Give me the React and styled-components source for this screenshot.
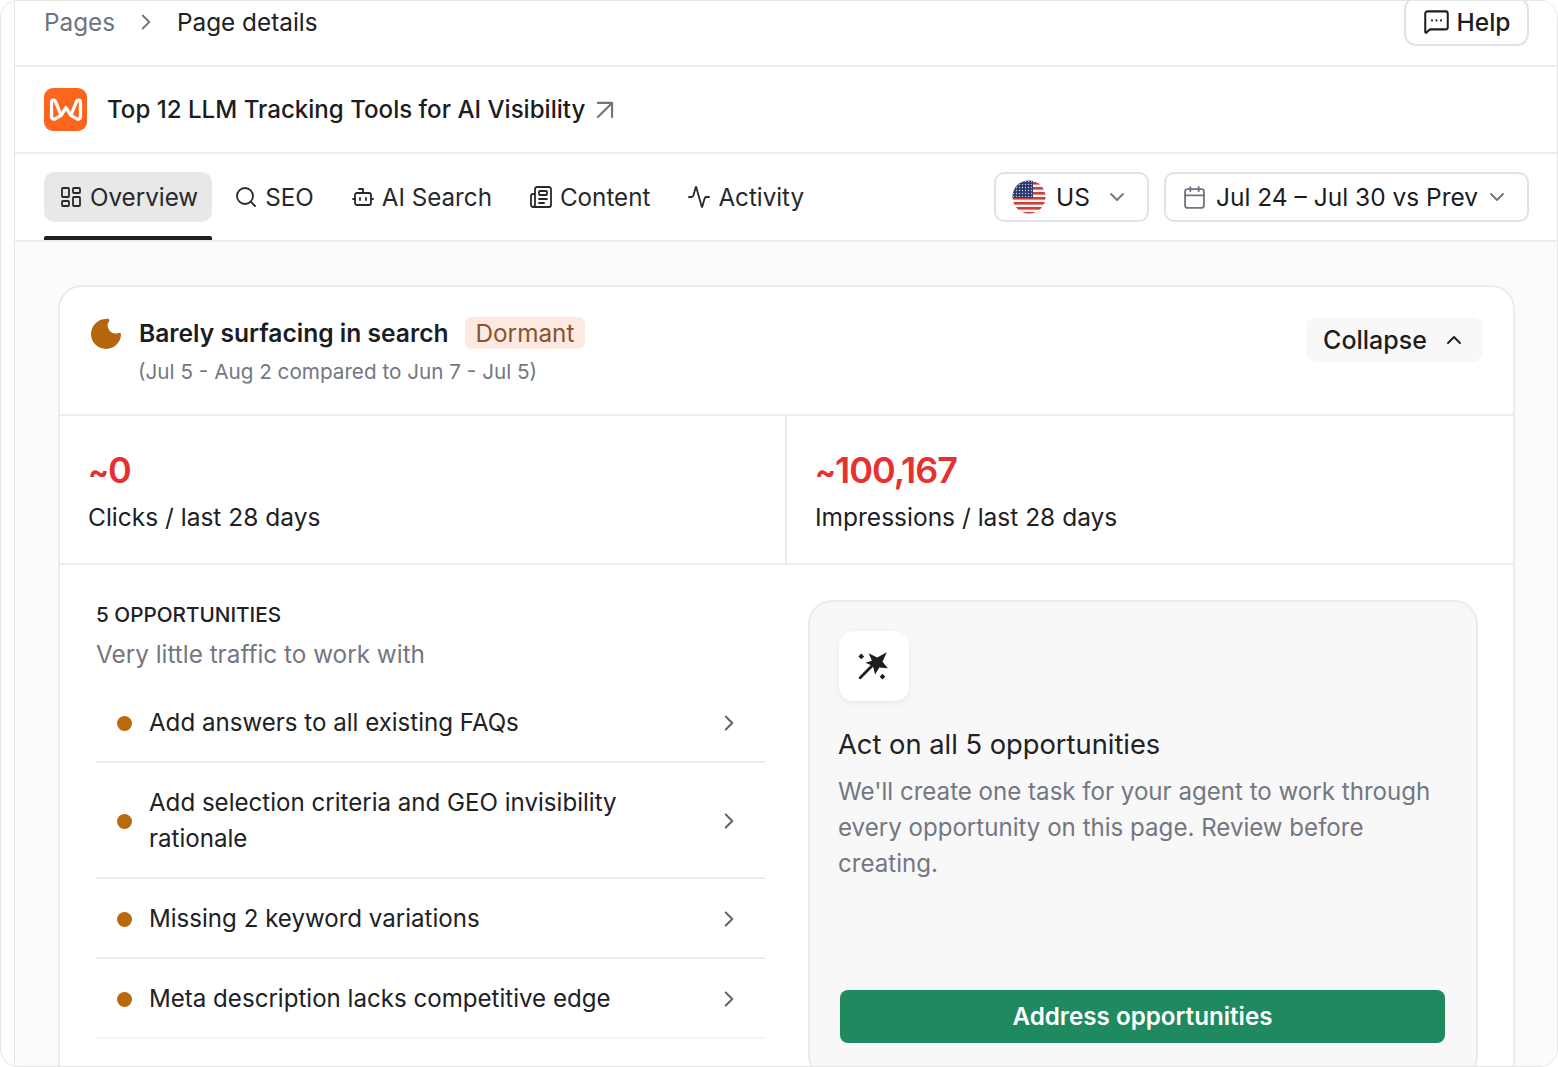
import * as React from "react"
import styled, { createGlobalStyle } from "styled-components"
import {
  Activity,
  ArrowUpRight,
  Bot,
  Calendar,
  ChevronDown,
  ChevronRight,
  ChevronUp,
  LayoutDashboard,
  MessageSquareMore,
  Newspaper,
  Search,
} from "lucide-react"

const GlobalStyle = createGlobalStyle`
  html, body {
    margin: 0;
    padding: 0;
    background: #fff;
    overflow: hidden;
  }
  * { box-sizing: border-box; }
  body {
    font-family: Inter, "Liberation Sans", sans-serif;
    color: #1c1d1f;
    -webkit-font-smoothing: antialiased;
  }
`

const Frame = styled.div`
  width: 1558px;
  height: 1067px;
  padding-left: 13px;
  border: 1px solid #e6e6e6;
  border-radius: 18px;
  overflow: hidden;
  background: #fff;
`
const Main = styled.div`
  height: 100%;
  border-left: 1px solid #e8e8e8;
  background: #fbfbfb;
  overflow: hidden;
`
const TopBar = styled.header`
  height: 66px;
  padding: 0 28px 23px 29px;
  display: flex;
  align-items: center;
  justify-content: space-between;
  background: #fff;
  border-bottom: 2px solid #ececec;
`
const Crumbs = styled.nav`
  display: flex;
  align-items: center;
  font-size: 24.3px;
  color: #202124;
`
const CrumbMuted = styled.span`
  color: #6f7480;
`
const CrumbSep = styled.span`
  display: flex;
  margin: 0 18px;
  color: #6f7480;
`
const HelpButton = styled.button`
  flex: none;
  width: 125px;
  height: 49px;
  display: flex;
  align-items: center;
  justify-content: center;
  gap: 7px;
  font: 500 24.5px Inter, sans-serif;
  color: #1c1d1f;
  background: #fff;
  border: 2px solid #e3e3e5;
  border-radius: 12px;
`
const TitleRow = styled.div`
  height: 87px;
  padding-left: 29px;
  display: flex;
  align-items: center;
  background: #fff;
  border-bottom: 2px solid #ececec;
`
const Logo = styled.div`
  width: 43px;
  height: 43px;
  margin-right: 20px;
  border-radius: 9px;
  background: #fb651e;
  display: flex;
  align-items: center;
  justify-content: center;
`
const PageTitle = styled.h1`
  margin: 0 3px 0 0;
  font-size: 24.1px;
  font-weight: 500;
  color: #1c1d1f;
`
const TabBar = styled.div`
  height: 88px;
  padding: 18px 28px 0 29px;
  display: flex;
  align-items: flex-start;
  background: #fff;
  border-bottom: 2px solid #ececec;
`
const Tabs = styled.div`
  display: flex;
  flex: 1;
  gap: 22px;
`
const Tab = styled.div`
  position: relative;
  height: 50px;
  padding: ${(p) => (p.$active ? "0 14px 0 15px" : "0")};
  margin-right: ${(p) => (p.$active ? "0" : "15px")};
  display: flex;
  align-items: center;
  gap: 7px;
  font-size: 24.2px;
  border-radius: 10px;
  background: ${(p) => (p.$active ? "#e8e8e8" : "transparent")};
  color: #26282c;

  &::after {
    content: "";
    display: ${(p) => (p.$active ? "block" : "none")};
    position: absolute;
    left: 0;
    right: 0;
    top: 64px;
    height: 4px;
    background: #1f2023;
    border-radius: 2px 2px 0 0;
  }
`
const Filters = styled.div`
  display: flex;
  gap: 15px;
`
const Select = styled.div`
  width: ${(p) => p.$width}px;
  height: 50px;
  padding: 0 18px 0 ${(p) => p.$left}px;
  display: flex;
  align-items: center;
  justify-content: space-between;
  font-size: 24.5px;
  white-space: nowrap;
  color: #1c1d1f;
  background: #fff;
  border: 2px solid #e3e3e5;
  border-radius: 10px;
`
const SelectLabel = styled.span`
  display: flex;
  align-items: center;
  gap: ${(p) => p.$gap}px;
`
const Body = styled.main`
  padding: 43px 42px 0 43px;
`
const Card = styled.section`
  background: #fff;
  border: 2px solid #ececec;
  border-radius: 24px;
  height: 900px;
`
const CardHead = styled.div`
  height: 129px;
  padding: 30px 30px 0 30px;
  display: flex;
  justify-content: space-between;
  align-items: flex-start;
  border-bottom: 2px solid #ececec;
`
const StatusIcon = styled.svg`
  flex: none;
  width: 32px;
  height: 32px;
  margin: 1px 17px 0 0;
`
const HeadText = styled.div`
  flex: 1;
`
const HeadTitle = styled.div`
  height: 32px;
  display: flex;
  align-items: center;
  gap: 16px;
  font-size: 24.6px;
  font-weight: 600;
`
const Badge = styled.span`
  height: 32px;
  padding: 0 11px;
  display: flex;
  align-items: center;
  font-size: 24.3px;
  font-weight: 400;
  color: #8a5233;
  background: #fde9df;
  border-radius: 7px;
`
const HeadSub = styled.div`
  margin-top: 8px;
  margin-left: -1px;
  font-size: 20.7px;
  line-height: 30px;
  color: #737782;
`
const CollapseButton = styled.button`
  width: 177px;
  height: 45px;
  padding: 0;
  display: flex;
  align-items: center;
  justify-content: center;
  gap: 15px;
  font: 500 25px Inter, sans-serif;
  color: #1c1d1f;
  background: #f8f8f8;
  border: none;
  border-radius: 10px;
`
const Stats = styled.div`
  display: grid;
  grid-template-columns: 725px 1fr;
  height: 149px;
  border-bottom: 2px solid #ececec;
`
const Stat = styled.div`
  padding: 31px 28px 0;
  & + & {
    border-left: 2px solid #ececec;
  }
`
const StatValue = styled.div`
  height: 46px;
  line-height: 46px;
  font-size: 36px;
  font-weight: 600;
  letter-spacing: -1px;
  color: #e5312f;
`
const Tilde = styled.span`
  font-size: 31px;
  font-weight: 700;
`
const StatLabel = styled.div`
  margin-top: 6px;
  line-height: 36px;
  font-size: 24.5px;
  color: #202124;
`
const Split = styled.div`
  display: grid;
  grid-template-columns: 669px 670px;
  column-gap: 43px;
  padding: 34px 0 0 36px;
`
const SectionLabel = styled.div`
  margin-top: 2px;
  font-size: 20.7px;
  line-height: 28px;
  font-weight: 500;
  color: #202124;
`
const SectionHint = styled.div`
  margin-top: 7px;
  margin-bottom: 11px;
  font-size: 24.3px;
  line-height: 36px;
  color: #737782;
`
const Row = styled.div`
  padding: 22px 23px 20px 21px;
  display: flex;
  align-items: center;
  border-bottom: 2px solid ${(p) => (p.$last ? "#f5f5f5" : "#ececec")};
`
const Dot = styled.span`
  flex: none;
  width: 15px;
  height: 15px;
  margin-right: 17px;
  border-radius: 50%;
  background: #b96a0a;
`
const RowText = styled.div`
  flex: 1;
  max-width: 490px;
  font-size: 24.1px;
  line-height: 36px;
  color: #202124;
`
const RowArrow = styled.span`
  display: flex;
  margin-left: auto;
  color: #5e626b;
`
const ActionPanel = styled.aside`
  height: 480px;
  margin-top: 1px;
  padding: 29px 30px 0 28px;
  background: #f8f8f8;
  border: 2px solid #ececec;
  border-radius: 24px;
`
const WandBox = styled.div`
  width: 70px;
  height: 70px;
  margin-left: 1px;
  display: flex;
  align-items: center;
  justify-content: center;
  background: #fff;
  border-radius: 14px;
  box-shadow: 0 2px 6px rgba(0, 0, 0, 0.07);
`
const ActionTitle = styled.h2`
  margin: 25px 0 0;
  font-size: 27.3px;
  line-height: 38px;
  font-weight: 400;
  color: #202124;
`
const ActionText = styled.p`
  margin: 10px 0 0;
  font-size: 24.1px;
  line-height: 36px;
  color: #737782;
`
const ActionButton = styled.button`
  display: block;
  width: 605px;
  height: 53px;
  margin: 108px 0 0 2px;
  font: 600 24.2px Inter, sans-serif;
  color: #fff;
  background: #1f8a5f;
  border: none;
  border-radius: 8px;
`

function LogoMark() {
  return (
    <svg width="36" height="26" viewBox="0 0 36 27" fill="none" stroke="#fff" strokeWidth="3.4" strokeLinejoin="round" strokeLinecap="round">
      <path d="M3 5.5 C3 3 6 2.5 7 4.5 L13 19 L18 11 L23 19 L29 4.5 C30 2.5 33 3 33 5.5 V20 C33 23 30 24 28 22 L23 19 M13 19 L8 22 C6 24 3 23 3 20 V5.5" />
    </svg>
  )
}

function Flag() {
  const stripes = [0, 5, 10, 15, 20, 25, 30]
  return (
    <svg width="34" height="34" viewBox="0 0 34 34">
      <defs>
        <clipPath id="flag-clip">
          <circle cx="17" cy="17" r="16.5" />
        </clipPath>
        <pattern id="flag-stars" width="3" height="3" patternUnits="userSpaceOnUse">
          <circle cx="1.5" cy="1.5" r="0.7" fill="#c8cfe0" />
        </pattern>
      </defs>
      <g clipPath="url(#flag-clip)">
        <rect width="34" height="34" fill="#f4f1f1" />
        {stripes.map((y) => (
          <rect key={y} y={y + 2} width="34" height="2.6" fill="#c9413f" />
        ))}
        <rect width="21" height="18" fill="#2b3a6e" />
        <rect width="21" height="18" fill="url(#flag-stars)" />
      </g>
    </svg>
  )
}

function Wand() {
  return (
    <svg width="34" height="34" viewBox="0 0 32 32" fill="#1c1d1f">
      <path d="M11 4 L19 8 L28 3 L24 12 L29 18 L21 17.5 L17 24 L15 16 L8 13 L14 11 Z" />
      <path d="M14 16 L3 27" stroke="#1c1d1f" strokeWidth="2.6" strokeLinecap="round" />
      <path d="M4 4.3 L6.7 7 L4 9.7 L1.3 7 Z" />
      <path d="M24 23.3 L26.7 26 L24 28.7 L21.3 26 Z" />
    </svg>
  )
}

const opportunities = [
  "Add answers to all existing FAQs",
  "Add selection criteria and GEO invisibility rationale",
  "Missing 2 keyword variations",
  "Meta description lacks competitive edge",
]

export default function App() {
  return (
    <Frame>
      <GlobalStyle />
      <Main>
        <TopBar>
          <Crumbs>
            <CrumbMuted>Pages</CrumbMuted>
            <CrumbSep>
              <ChevronRight size={26} strokeWidth={1.7} />
            </CrumbSep>
            Page details
          </Crumbs>
          <HelpButton>
            <MessageSquareMore size={27} strokeWidth={1.8} />
            Help
          </HelpButton>
        </TopBar>

        <TitleRow>
          <Logo>
            <LogoMark />
          </Logo>
          <PageTitle>Top 12 LLM Tracking Tools for AI Visibility</PageTitle>
          <ArrowUpRight size={34} strokeWidth={1.5} color="#6f7480" />
        </TitleRow>

        <TabBar>
          <Tabs>
            <Tab $active>
              <LayoutDashboard size={24} strokeWidth={1.8} />
              Overview
            </Tab>
            <Tab>
              <Search size={24} strokeWidth={1.8} />
              SEO
            </Tab>
            <Tab>
              <Bot size={24} strokeWidth={1.8} />
              AI Search
            </Tab>
            <Tab>
              <Newspaper size={24} strokeWidth={1.8} />
              Content
            </Tab>
            <Tab>
              <Activity size={24} strokeWidth={1.8} />
              Activity
            </Tab>
          </Tabs>
          <Filters>
            <Select $width={155} $left={16}>
              <SelectLabel $gap={10}>
                <Flag />
                US
              </SelectLabel>
              <ChevronDown size={24} strokeWidth={1.8} color="#6f7480" />
            </Select>
            <Select $width={365} $left={16}>
              <SelectLabel $gap={9}>
                <Calendar size={25} strokeWidth={1.8} color="#6f7480" />
                Jul 24 – Jul 30 vs Prev
              </SelectLabel>
              <ChevronDown size={24} strokeWidth={1.8} color="#6f7480" />
            </Select>
          </Filters>
        </TabBar>

        <Body>
          <Card>
            <CardHead>
              <StatusIcon viewBox="0 0 32 32">
                <path d="M16 1 A15 15 0 1 0 31 16 A1.6 1.6 0 0 0 28.5 15 A8 8 0 0 1 18.5 4 A1.8 1.8 0 0 0 16 1 Z" fill="#b5650b" />
              </StatusIcon>
              <HeadText>
                <HeadTitle>
                  Barely surfacing in search
                  <Badge>Dormant</Badge>
                </HeadTitle>
                <HeadSub>(Jul 5 - Aug 2 compared to Jun 7 - Jul 5)</HeadSub>
              </HeadText>
              <CollapseButton>
                Collapse
                <ChevronUp size={24} strokeWidth={1.9} />
              </CollapseButton>
            </CardHead>

            <Stats>
              <Stat>
                <StatValue><Tilde>~</Tilde>0</StatValue>
                <StatLabel>Clicks / last 28 days</StatLabel>
              </Stat>
              <Stat>
                <StatValue><Tilde>~</Tilde>100,167</StatValue>
                <StatLabel>Impressions / last 28 days</StatLabel>
              </Stat>
            </Stats>

            <Split>
              <div>
                <SectionLabel>5 OPPORTUNITIES</SectionLabel>
                <SectionHint>Very little traffic to work with</SectionHint>
                {opportunities.map((text, i) => (
                  <Row key={text} $last={i === opportunities.length - 1}>
                    <Dot />
                    <RowText>{text}</RowText>
                    <RowArrow>
                      <ChevronRight size={26} strokeWidth={1.8} />
                    </RowArrow>
                  </Row>
                ))}
              </div>
              <ActionPanel>
                <WandBox>
                  <Wand />
                </WandBox>
                <ActionTitle>Act on all 5 opportunities</ActionTitle>
                <ActionText>
                  We'll create one task for your agent to work through every opportunity on this page. Review before creating.
                </ActionText>
                <ActionButton>Address opportunities</ActionButton>
              </ActionPanel>
            </Split>
          </Card>
        </Body>
      </Main>
    </Frame>
  )
}
